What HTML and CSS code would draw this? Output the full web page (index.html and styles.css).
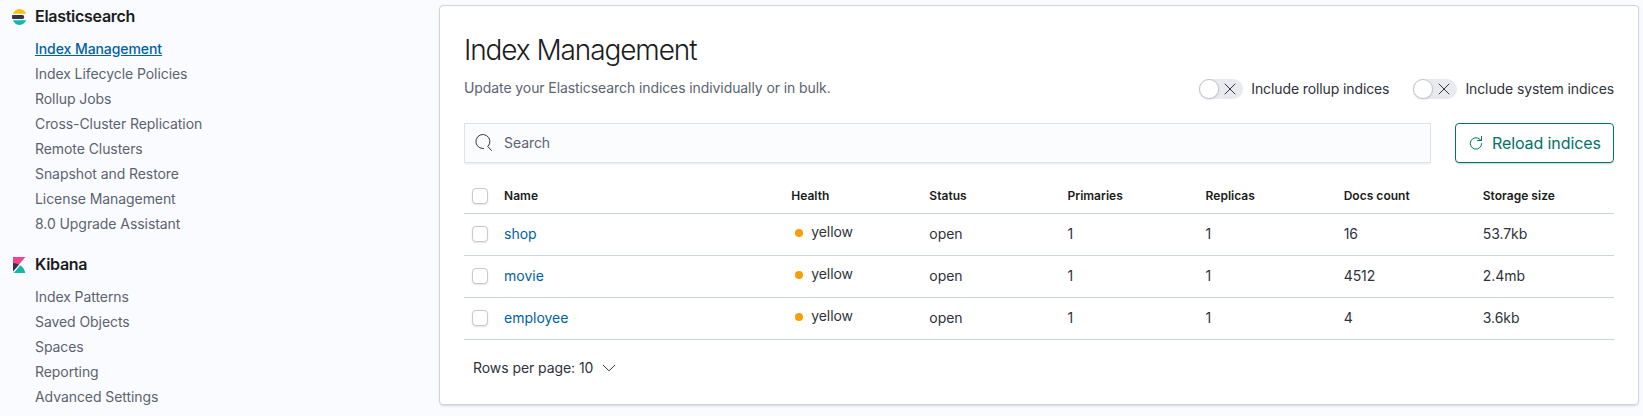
FILE: index.html
```html
<!DOCTYPE html>
<html lang="en">
<head>
<meta charset="utf-8">
<title>Index Management</title>
<link rel="stylesheet" href="styles.css">
</head>
<body>
<div class="app">
  <nav class="sidebar">
    <section class="nav-group">
      <h2 class="nav-title">
        <svg class="nav-icon" width="16" height="16" viewBox="0 0 32 32"><path fill="#FEBC14" d="M4 9.500h25.700a5.900 5.900 0 0 0 .5-.6A15.900 15.900 0 0 0 17.500 0C11.500 0 6 4 4 9.500z"/><path fill="#343741" d="M2.500 12h20a4 4 0 0 1 0 8h-20A16 16 0 0 1 2.500 12z"/><path fill="#12B8AC" d="M4 22.500C6 28 11.500 32 17.500 32a15.900 15.900 0 0 0 12.700-8.900l-.5-.6z"/></svg>
        Elasticsearch</h2>
      <ul class="nav-list">
        <li><a class="nav-link nav-link-active">Index Management</a></li>
        <li><a class="nav-link">Index Lifecycle Policies</a></li>
        <li><a class="nav-link">Rollup Jobs</a></li>
        <li><a class="nav-link">Cross-Cluster Replication</a></li>
        <li><a class="nav-link">Remote Clusters</a></li>
        <li><a class="nav-link">Snapshot and Restore</a></li>
        <li><a class="nav-link">License Management</a></li>
        <li><a class="nav-link">8.0 Upgrade Assistant</a></li>
      </ul>
    </section>
    <section class="nav-group">
      <h2 class="nav-title">
        <svg class="nav-icon" width="16" height="16" viewBox="0 0 32 32"><path fill="#F0458E" d="M4 0v28.800L28.900.1z"/><path fill="#343741" d="M4 12v16.800l11.900-13.700A24 24 0 0 0 4 12z"/><path fill="#12B8AC" d="M18.500 16.700 6.300 30.800 5.300 32h23.200a24.500 24.500 0 0 0-10-15.300"/></svg>
        Kibana</h2>
      <ul class="nav-list">
        <li><a class="nav-link">Index Patterns</a></li>
        <li><a class="nav-link">Saved Objects</a></li>
        <li><a class="nav-link">Spaces</a></li>
        <li><a class="nav-link">Reporting</a></li>
        <li><a class="nav-link">Advanced Settings</a></li>
      </ul>
    </section>
  </nav>
  <main class="panel">
    <h1 class="title">Index Management</h1>
    <div class="intro">
      <p class="subtitle">Update your Elasticsearch indices individually or in bulk.</p>
      <div class="switches">
        <div class="switch"><span class="track"><span class="thumb"></span><svg class="cross" width="12" height="12" viewBox="0 0 12 12"><path d="M1 1l10 10M11 1L1 11"/></svg></span><span class="switch-label">Include rollup indices</span></div>
        <div class="switch"><span class="track"><span class="thumb"></span><svg class="cross" width="12" height="12" viewBox="0 0 12 12"><path d="M1 1l10 10M11 1L1 11"/></svg></span><span class="switch-label">Include system indices</span></div>
      </div>
    </div>
    <div class="toolbar">
      <div class="search">
        <svg class="search-icon" width="18" height="18" viewBox="0 0 18 18"><path d="M8.500 14.500H8a7 7 0 1 1 4.800-2L16.500 16.500"/></svg>
        <span>Search</span>
      </div>
      <button class="reload">
        <svg class="reload-icon" width="14" height="14" viewBox="0 0 14 14"><path d="M12.700 7.500A5.700 5.700 0 1 1 10.800 3.200L12 4.500M12.500.5v4h-4"/></svg>
        <span>Reload indices</span>
      </button>
    </div>
    <table class="table">
      <colgroup><col class="col-check"><col class="col-name"><col class="col-std"><col class="col-std"><col class="col-std"><col class="col-std"><col class="col-wide"><col class="col-wide"></colgroup>
      <thead>
        <tr><th><span class="checkbox"></span></th><th>Name</th><th>Health</th><th>Status</th><th>Primaries</th><th>Replicas</th><th>Docs count</th><th>Storage size</th></tr>
      </thead>
      <tbody>
        <tr><td><span class="checkbox"></span></td><td><a class="index-link">shop</a></td><td><span class="health"><i class="dot"></i>yellow</span></td><td>open</td><td>1</td><td>1</td><td>16</td><td>53.7kb</td></tr>
        <tr><td><span class="checkbox"></span></td><td><a class="index-link">movie</a></td><td><span class="health"><i class="dot"></i>yellow</span></td><td>open</td><td>1</td><td>1</td><td>4512</td><td>2.4mb</td></tr>
        <tr><td><span class="checkbox"></span></td><td><a class="index-link">employee</a></td><td><span class="health"><i class="dot"></i>yellow</span></td><td>open</td><td>1</td><td>1</td><td>4</td><td>3.6kb</td></tr>
      </tbody>
    </table>
    <div class="pager">
      <span>Rows per page: 10</span>
      <svg class="chevron" width="14" height="8" viewBox="0 0 14 8"><path d="M1.200 1.200l5 5q.8.700 1.600 0l5-5"/></svg>
    </div>
  </main>
</div>
</body>
</html>
```
FILE: styles.css
```css
* { box-sizing: border-box; }
body {
  margin: 0;
  background: #fafbfe;
  color: #2f323c;
  font: 14px/20px Inter, "Liberation Sans", sans-serif;
  letter-spacing: -0.07px;
}
.app { display: flex; height: 416px; overflow: hidden; }
.sidebar { width: 439px; flex: none; padding: 4px 0 0 11px; }
.nav-group { margin-bottom: 16px; }
.nav-title {
  display: flex;
  align-items: center;
  gap: 8px;
  margin: 0 0 7px;
  color: #1a1c21;
  font-size: 16px;
  font-weight: 600;
  line-height: 25px;
  letter-spacing: -0.28px;
}
.nav-icon { flex: none; }
.nav-list { list-style: none; margin: 0; padding: 0 0 0 24px; }
.nav-link { display: block; line-height: 25px; color: #5c6370; }
.nav-link-active { color: #0061a6; font-weight: 500; text-decoration: underline; }
.panel {
  width: 1200px;
  height: 400px;
  margin-top: 5px;
  padding: 24px;
  background: #fff;
  border: 1px solid #cdd5e2;
  border-radius: 4px;
  box-shadow: 0 2px 2px -1px rgba(152, 162, 179, .3), 0 1px 5px -2px rgba(152, 162, 179, .3);
}
.title {
  margin: 0;
  color: #1a1c21;
  font-size: 28px;
  font-weight: 300;
  line-height: 40px;
  letter-spacing: -1.1px;
}
.intro { display: flex; justify-content: space-between; height: 33px; margin-bottom: 20px; }
.subtitle { margin: 8px 0 0; color: #5c6370; letter-spacing: -0.09px; }
.switches { display: flex; gap: 24px; padding-top: 9px; }
.switch { display: flex; gap: 8px; height: 20px; }
.switch-label { letter-spacing: -0.11px; }
.track {
  display: flex;
  align-items: center;
  justify-content: space-between;
  width: 44px;
  height: 20px;
  padding-right: 7px;
  border-radius: 10px;
  background: #e9eaef;
}
.thumb { width: 20px; height: 20px; border: 1px solid #c3c5c9; border-radius: 50%; background: #fff; box-shadow: 0 1px 2px rgba(152, 162, 179, .3); }
.cross, .search-icon, .chevron { fill: none; stroke: #343741; stroke-linecap: round; }
.toolbar { display: flex; gap: 24px; height: 40px; }
.search {
  display: flex;
  flex: 1;
  align-items: center;
  gap: 11px;
  padding: 0 10px;
  border: 1px solid #dfe2e6;
  background: #fbfcfe;
  color: #5c6370;
  box-shadow: 0 2px 2px -1px rgba(152, 162, 179, .25);
}
.reload {
  display: flex;
  align-items: center;
  gap: 9px;
  width: 159px;
  padding: 0 13px;
  border: 1px solid #007268;
  border-radius: 4px;
  background: #fff;
  color: #007268;
  font: 16px/24px Inter, sans-serif;
  letter-spacing: -0.1px;
  white-space: nowrap;
  box-shadow: 0 2px 2px -1px rgba(54, 97, 126, .3);
}
.reload span { padding-bottom: 1px; }
.reload-icon { flex: none; fill: none; stroke: #007268; stroke-linecap: round; }
.table { width: 1150px; margin-top: 14px; table-layout: fixed; border-collapse: separate; border-spacing: 0; }
.col-check { width: 32px; }
.col-name { width: 287px; }
.col-std { width: 138px; }
.col-wide { width: 139px; }
.table th, .table td { border-bottom: 1px solid #cad4de; text-align: left; vertical-align: middle; }
.table th { height: 37px; padding: 2px 8px 0; color: #1a1c21; font-size: 12px; font-weight: 600; letter-spacing: 0.02px; }
.table td { height: 42px; padding: 0 8px 2px; }
.checkbox { display: block; width: 16px; height: 16px; border: 1px solid #c8cacd; border-radius: 4px; background: #fff; box-shadow: 0 1px 2px rgba(152, 162, 179, .3); }
.index-link { color: #0061a6; letter-spacing: 0; }
.health { display: flex; align-items: center; gap: 8px; padding: 0 0 3px 4px; }
.dot { width: 8px; height: 8px; margin-top: 2px; border-radius: 50%; background: #f5a000; }
.pager { display: flex; align-items: center; gap: 9px; padding: 18px 9px; }
```
